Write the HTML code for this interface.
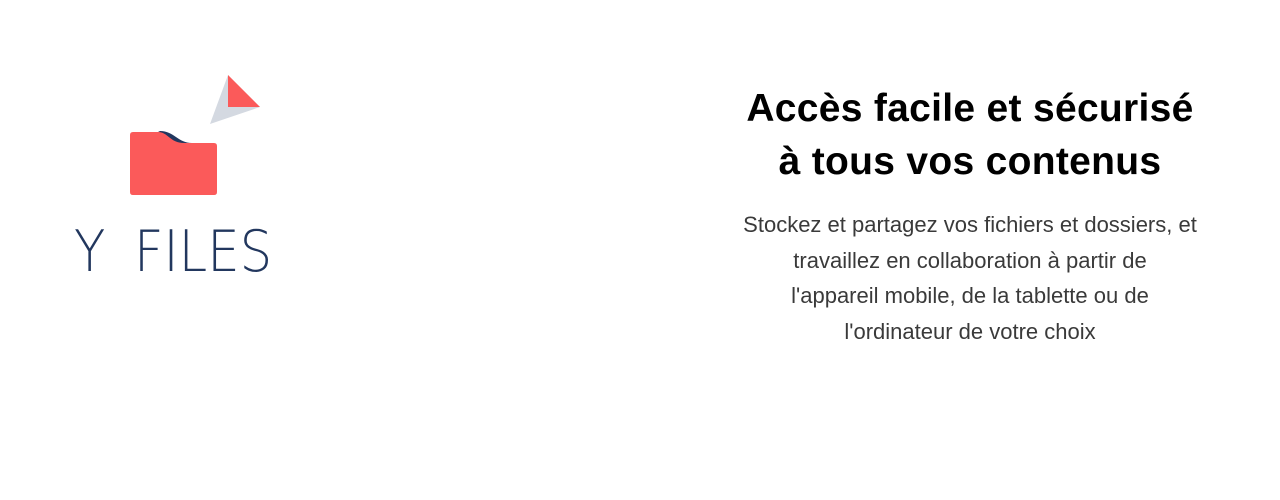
<!DOCTYPE html>
<html><head><meta charset="utf-8"><style>
html,body{margin:0;padding:0;background:#fff;width:1280px;height:500px;overflow:hidden;position:relative}
.logo{position:absolute;left:0;top:0}
.yf{position:absolute;top:222px;font-family:"DejaVu Sans","Liberation Sans",sans-serif;font-weight:200;font-size:57px;color:#22375e;line-height:60px;transform:scaleX(0.9);transform-origin:left}
h1{position:absolute;left:570px;width:800px;top:82px;margin:0;text-align:center;font-family:"Liberation Sans",sans-serif;font-weight:bold;font-size:39px;line-height:53px;color:#000;letter-spacing:0.3px}
p{position:absolute;left:570px;width:800px;top:207px;margin:0;text-align:center;font-family:"Liberation Sans",sans-serif;font-size:22px;line-height:35.5px;color:#3a3a3a}
</style></head><body>
<svg class="logo" width="300" height="210">
<polygon points="228,75 260,107 210,124" fill="#d4d9e1"/>
<polygon points="228,75 260,107 228,107" fill="#fb5a5a"/>
<path d="M160,131 C174,131 178,143 192,143 L180,143 C168,143 166,135 156,133 Z" fill="#22375e"/>
<path d="M133,132 L158,132 C168,132 170,143 184,143 L214,143 Q217,143 217,146 L217,192 Q217,195 214,195 L133,195 Q130,195 130,192 L130,135 Q130,132 133,132 Z" fill="#fb5a5a"/>
</svg>
<div class="yf" style="left:74px">Y</div>
<div class="yf" style="left:134px">FILES</div>
<h1>Accès facile et sécurisé<br>à tous vos contenus</h1>
<p>Stockez et partagez vos fichiers et dossiers, et<br>travaillez en collaboration à partir de<br>l'appareil mobile, de la tablette ou de<br>l'ordinateur de votre choix</p>
</body></html>
